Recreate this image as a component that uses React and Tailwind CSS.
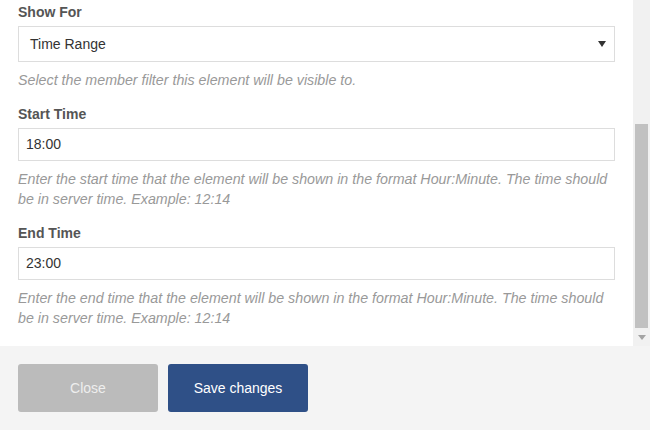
import React from "react";

const fields = [
  {
    label: "Start Time",
    value: "18:00",
    help: "Enter the start time that the element will be shown in the format Hour:Minute. The time should be in server time. Example: 12:14",
  },
  {
    label: "End Time",
    value: "23:00",
    help: "Enter the end time that the element will be shown in the format Hour:Minute. The time should be in server time. Example: 12:14",
  },
];

const Label = ({ children }) => (
  <label className="block text-[14px] leading-[18px] font-bold text-[#555] mb-[5px]">
    {children}
  </label>
);

const Help = ({ children }) => (
  <p className="mt-2 text-[14.25px] leading-5 italic text-[#999]">{children}</p>
);

const App = () => {
  return (
    <div
      className="w-[650px] h-[430px] flex flex-col bg-white overflow-hidden"
      style={{ fontFamily: '"Liberation Sans", Arial, sans-serif' }}
    >
      {/* Modal body */}
      <div className="h-[346px] flex">
        <div className="flex-1 pl-[18px] pr-[18px] pt-[3px] flex flex-col gap-[15px]">
          <div>
            <Label>Show For</Label>
            <div className="h-[36px] border border-[#ddd] flex items-center justify-between pl-[11px] pr-[8px] text-[14px] text-[#333]">
              <span>Time Range</span>
              <svg width="8" height="6" viewBox="0 0 8 6">
                <path d="M0 0h8L4 6z" fill="#333" />
              </svg>
            </div>
            <Help>Select the member filter this element will be visible to.</Help>
          </div>

          {fields.map((f) => (
            <div key={f.label}>
              <Label>{f.label}</Label>
              <div className="h-[33px] border border-[#ddd] flex items-center pl-[7px] text-[14px] text-[#333]">
                {f.value}
              </div>
              <Help>{f.help}</Help>
            </div>
          ))}
        </div>

        {/* Scrollbar */}
        <div className="w-[17px] bg-[#f1f1f1] flex flex-col items-center">
          <div className="h-[124px]" />
          <div className="w-[13px] h-[204px] bg-[#c1c1c1]" />
          <div className="flex-1 flex items-center justify-center">
            <svg width="8" height="5" viewBox="0 0 8 5">
              <path d="M0 0h8L4 5z" fill="#a3a3a3" />
            </svg>
          </div>
        </div>
      </div>

      {/* Footer */}
      <div className="flex-1 bg-[#f4f4f4] pl-[18px] pt-[18px] flex gap-[10px]">
        <button className="w-[140px] h-[48px] rounded-[3px] bg-[#bbbbbb] text-[#eeeeee] text-[14px]">
          Close
        </button>
        <button className="w-[140px] h-[48px] rounded-[3px] bg-[#2f5087] text-white text-[14px]">
          Save changes
        </button>
      </div>
    </div>
  );
};

export default App;
